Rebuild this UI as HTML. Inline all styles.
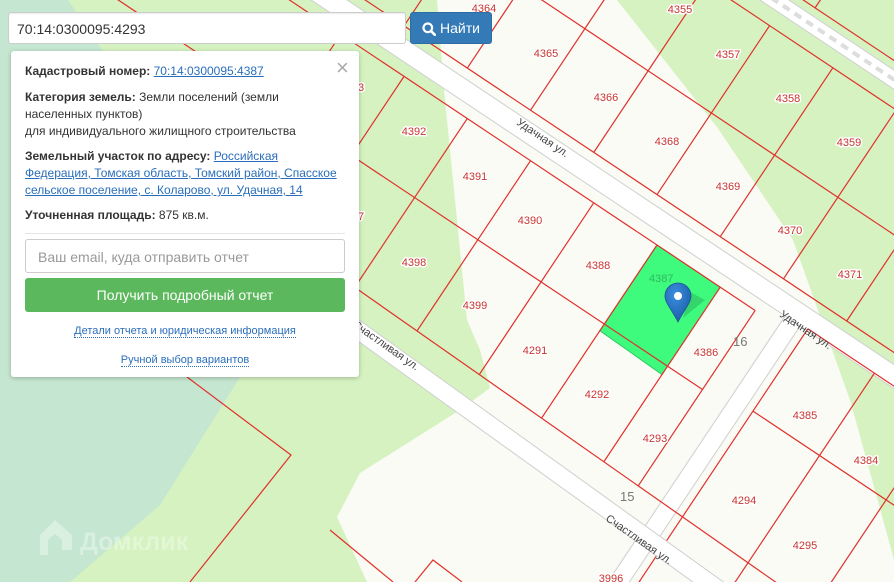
<!DOCTYPE html>
<html><head><meta charset="utf-8">
<style>
html,body{margin:0;padding:0;width:894px;height:582px;overflow:hidden;font-family:"Liberation Sans","DejaVu Sans",sans-serif;}
#map{position:absolute;left:0;top:0;display:block;}
.search{position:absolute;left:8px;top:12px;width:398px;height:32px;border:1px solid #ccc;border-radius:3px;background:#fff;box-sizing:border-box;font-size:14px;color:#333;padding:8px 0 0 8px;box-shadow:inset 0 1px 1px rgba(0,0,0,.075);}
.btn{position:absolute;left:410px;top:12px;width:82px;height:32px;background:#337ab7;border:1px solid #2e6da4;border-radius:3px;box-sizing:border-box;color:#fff;font-size:14px;}
.btn svg{position:absolute;left:11px;top:9px;}
.btn span{position:absolute;left:29px;top:7px;}
.panel{position:absolute;left:11px;top:51px;width:348px;height:326px;background:#fff;border-radius:3px;box-shadow:0 1px 4px rgba(0,0,0,.25);font-size:12px;color:#333;}
.panel p{margin:0;position:absolute;left:14px;line-height:17px;white-space:nowrap;}
.panel b{font-weight:bold;}
.panel a{color:#2a6ebb;text-decoration:underline;}
.close{position:absolute;left:325px;top:4px;font-size:22px;color:#aaa;}
.hr{position:absolute;left:14px;top:182px;width:320px;height:1px;background:#e5e5e5;}
.email{position:absolute;left:14px;top:188px;width:320px;height:34px;border:1px solid #ccc;border-radius:3px;box-sizing:border-box;font-size:14px;color:#999;padding:9px 0 0 12px;}
.go{position:absolute;left:14px;top:227px;width:320px;height:34px;background:#5cb85c;border-radius:3px;color:#fff;font-size:14px;text-align:center;line-height:34px;}
.lk{position:absolute;left:0;width:348px;text-align:center;font-size:11px;}
.lk span{color:#2a6ebb;border-bottom:1px dotted #2a6ebb;}
</style></head><body>
<svg id="map" width="894" height="582" viewBox="0 0 894 582" xmlns="http://www.w3.org/2000/svg">
<defs>
 <clipPath id="cs"><polygon points="0,-200 894,-200 894,665 0,39"/></clipPath>
 <radialGradient id="pg" cx="40%" cy="30%" r="70%"><stop offset="0" stop-color="#3a8ee0"/><stop offset="1" stop-color="#1e5fa8"/></radialGradient>
</defs>
<rect width="894" height="582" fill="#d5f2c0"/>
<polygon points="0,0 68,0 150,120 210,260 240,377 160,505 70,582 0,582" fill="#c5e6d0"/>
<polygon points="437,0 617,0 717,127 793,240 850,400 873,483 894,560 894,582 367,582 337,517 360,473 460,410 490,388 480,350 467,320 455,200 444,90" fill="#fafbf4"/>
<g transform="translate(657,245) rotate(33.69)">
 <rect x="-700" y="-32" width="1400" height="20" fill="#fff" stroke="#cfcfcf" stroke-width="1"/>
 <rect x="-700" y="-277" width="1400" height="16" fill="#fff" stroke="#cfcfcf" stroke-width="1"/>
 <line x1="-700" y1="-269" x2="700" y2="-269" stroke="#ddd" stroke-width="4" stroke-dasharray="8,6"/>
 <polygon points="0,0 76,0 76,105 0,103" fill="#3efb7e" stroke="#32c864" stroke-width="1"/>
 <g stroke="#e0312c" stroke-width="1.2" fill="none">
  <line x1="-700" y1="0" x2="118" y2="0"/>
  <line x1="-700" y1="95" x2="118" y2="95"/>
  <line x1="-700" y1="-42" x2="700" y2="-42"/>
  <line x1="-700" y1="-140" x2="700" y2="-140"/>
  <line x1="-700" y1="-245" x2="700" y2="-245"/>
  <line x1="-700" y1="-285" x2="700" y2="-285"/>
  <path d="M-408 -245V-42M-332 -245V-42M-256 -245V-42M-180 -245V-42M-104 -245V-42M-28 -245V-42M48 -245V-42M124 -245V-42M200 -245V-42M276 -245V-42M352 -245V-42"/>
  <path d="M-300 -285V-380M-150 -285V-380M0 -285V-380M150 -285V-380M300 -285V-380"/>
  <line x1="172" y1="-14" x2="500" y2="-14"/>
  <line x1="172" y1="85" x2="500" y2="85"/>
  <line x1="172" y1="290" x2="500" y2="290"/>
  <path d="M172 -14V400M252 -14V400M332 -14V400M412 -14V400"/>
 </g>
</g>
<g clip-path="url(#cs)">
 <g transform="translate(657,245) rotate(33.69)">
  <path stroke="#e0312c" stroke-width="1.2" fill="none" d="M-380 0V260M-304 0V260M-228 0V260M-152 0V260M-76 0V260M0 0V260M76 0V260M118 0V260"/>
 </g>
</g>
<g transform="translate(657,245) rotate(33.69)">
 <rect x="146" y="-12" width="18" height="500" fill="#fff" stroke="#cfcfcf" stroke-width="1"/>
</g>
<line x1="340" y1="277" x2="894" y2="665" stroke="#e0312c" stroke-width="1.2"/>
<polygon points="330,299 900,709 900,731 330,321" fill="#fff" stroke="#cfcfcf" stroke-width="1"/>
<g stroke="#e0312c" stroke-width="1.2" fill="none">
 <path d="M187 377L291 455L190 582"/>
 <path d="M330 530L393 582"/>
 <path d="M415 582L433 560L462 582"/>
</g>
<g font-size="11" fill="#c8352f" text-anchor="middle" stroke="#fff" stroke-width="3" paint-order="stroke" stroke-linejoin="round">
 <text x="484" y="12">4364</text><text x="680" y="13">4355</text>
 <text x="546" y="57">4365</text><text x="728" y="58">4357</text>
 <text x="606" y="101">4366</text><text x="788" y="102">4358</text>
 <text x="667" y="145">4368</text><text x="849" y="146">4359</text>
 <text x="728" y="190">4369</text><text x="790" y="234">4370</text>
 <text x="850" y="278">4371</text>
 <text x="414" y="135">4392</text><text x="475" y="180">4391</text>
 <text x="530" y="224">4390</text><text x="598" y="269">4388</text>
 <text x="414" y="266">4398</text><text x="475" y="309">4399</text>
 <text x="535" y="354">4291</text><text x="597" y="398">4292</text>
 <text x="655" y="442">4293</text><text x="706" y="356">4386</text>
 <text x="805" y="419">4385</text><text x="866" y="464">4384</text>
 <text x="744" y="504">4294</text><text x="805" y="549">4295</text>
 <text x="611" y="582">3996</text>
 <text x="361" y="91">3</text><text x="361" y="220">7</text>
</g>
<text x="649" y="282" font-size="11" fill="#2fb85e">4387</text>
<text x="733" y="346" font-size="13" fill="#777">16</text>
<text x="620" y="501" font-size="13" fill="#777">15</text>
<g font-size="11" fill="#444">
 <text transform="translate(516,124) rotate(34)">Удачная ул.</text>
 <text transform="translate(779,316) rotate(34)">Удачная ул.</text>
 <text transform="translate(352,326) rotate(35)">Счастливая ул.</text>
 <text transform="translate(605,520) rotate(35)">Счастливая ул.</text>
</g>
<path d="M683 318L705 300L690 292Z" fill="rgba(0,0,0,.15)"/>
<path d="M678 322C672 310 665 303 665 296A13 13 0 0 1 691 296C691 303 684 310 678 322Z" fill="url(#pg)" stroke="#1a5597" stroke-width=".8"/>
<circle cx="678" cy="296" r="4" fill="#fff"/>
<g fill="rgba(255,255,255,.35)">
 <path d="M40 535L55 520L72 535V550H62V540L55 534L48 540V555H40Z"/>
 <text x="80" y="550" font-size="25" font-weight="bold">Домклик</text>
</g>
</svg>
<div class="search">70:14:0300095:4293</div>
<div class="btn"><svg width="14" height="14" viewBox="0 0 14 14"><circle cx="5.8" cy="5.8" r="4.3" fill="none" stroke="#fff" stroke-width="2.2"/><line x1="9" y1="9" x2="12.8" y2="12.8" stroke="#fff" stroke-width="2.6" stroke-linecap="round"/></svg><span>Найти</span></div>
<div class="panel">
 <div class="close">×</div>
 <p style="top:12px"><b>Кадастровый номер:</b> <a>70:14:0300095:4387</a></p>
 <p style="top:38px"><b>Категория земель:</b> Земли поселений (земли<br>населенных пунктов)<br>для индивидуального жилищного строительства</p>
 <p style="top:97px"><b>Земельный участок по адресу:</b> <a>Российская</a><br><a>Федерация, Томская область, Томский район, Спасское</a><br><a>сельское поселение, с. Коларово, ул. Удачная, 14</a></p>
 <p style="top:156px"><b>Уточненная площадь:</b> 875 кв.м.</p>
 <div class="hr"></div>
 <div class="email">Ваш email, куда отправить отчет</div>
 <div class="go">Получить подробный отчет</div>
 <div class="lk" style="top:274px"><span>Детали отчета и юридическая информация</span></div>
 <div class="lk" style="top:303px"><span>Ручной выбор вариантов</span></div>
</div>
</body></html>
